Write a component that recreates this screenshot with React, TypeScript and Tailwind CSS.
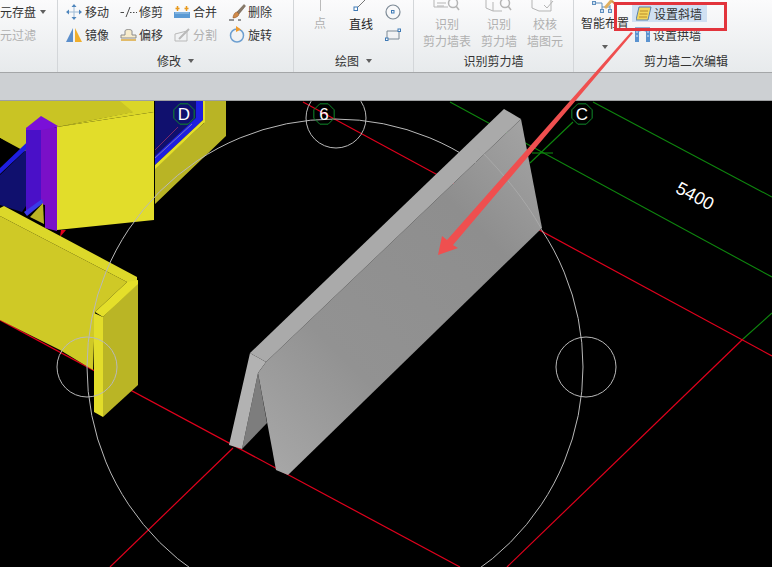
import React from 'react';

const IconMove = () => (
  <svg width="16" height="16" viewBox="0 0 16 16" fill="#4f86bd">
    <path d="M8 0l2.500 3h-5zM8 16l-2.500-3h5zM0 8l3-2.500v5zM16 8l-3 2.500v-5z" />
    <path d="M7.500 3h1v10h-1zM3 7.500h10v1H3z" fill="#9cbad6" />
  </svg>
);

const IconTrim = () => (
  <svg width="17" height="16" viewBox="0 0 17 16" fill="none" stroke="#4a4a4a">
    <path d="M0.500 8.500h3.500M10 3L6 13" />
    <path d="M10 8.500h7" strokeDasharray="1.500 1.500" />
  </svg>
);

const IconMerge = () => (
  <svg width="16" height="16" viewBox="0 0 16 16">
    <rect x="0" y="8" width="16" height="6" fill="#5b9ad4" />
    <path d="M1 9h14" stroke="#a8cbea" />
    <path d="M3.500 2v5M1.500 4.500h4M12.500 2v5M10.500 4.500h4" stroke="#e89a1e" strokeWidth="1.500" />
  </svg>
);

const IconBrush = () => (
  <svg width="17" height="18" viewBox="0 0 17 18" fill="none">
    <path d="M8 9L15 1.500l1.500 1.500L10 11z" fill="#8a7a68" stroke="#5a4c3e" strokeWidth="0.500" />
    <path d="M4 15c0-3 2-6 4-6l2 2c0 2-3 4-6 4z" fill="#cf8a4a" stroke="#8a4f20" strokeWidth="0.500" />
    <path d="M0 17h5M9 17h3" stroke="#333" />
  </svg>
);

const IconMirror = () => (
  <svg width="16" height="16" viewBox="0 0 16 16">
    <path d="M7 1v14H0z" fill="#5b8ecb" />
    <path d="M9 1v14h7z" fill="#f0ae2c" />
  </svg>
);

const IconOffset = () => (
  <svg width="17" height="16" viewBox="0 0 17 16" fill="none">
    <path d="M5 8V4c0-2 7-2 7 0v4h4v3H1V8z" fill="#f7eccd" stroke="#8c8c8c" />
    <path d="M1 13h15" stroke="#dca93c" strokeWidth="1.500" />
  </svg>
);

const IconSplit = () => (
  <svg width="17" height="16" viewBox="0 0 17 16" fill="none" stroke="#b9b9b9">
    <path d="M1 14V7l12-3v10z" />
    <path d="M5 12L15 2" strokeWidth="2" />
  </svg>
);

const IconRotate = () => (
  <svg width="16" height="17" viewBox="0 0 16 17" fill="none">
    <circle cx="8" cy="9.500" r="6.500" stroke="#6d9fd0" strokeWidth="1.500" />
    <path d="M7 0l5 3.500L7 6z" fill="#ef9a2c" />
  </svg>
);

const IconSlope = () => (
  <svg width="16" height="15" viewBox="0 0 16 15">
    <path d="M3 1h12l-3 13H0z" fill="#f3d65a" stroke="#5c83ad" />
    <path d="M4 5h8M3.500 8h8M3 11h8" stroke="#b88a2a" />
  </svg>
);

const IconArch = () => (
  <svg width="15" height="15" viewBox="0 0 15 15">
    <path d="M0 0h15v2H0z" fill="#8fb2d6" />
    <rect x="0" y="1" width="4" height="14" fill="#5b93d0" />
    <rect x="11" y="1" width="4" height="14" fill="#5b93d0" />
    <path d="M1 5h2M1 9h2M12 5h2M12 9h2" stroke="#d9e8f6" />
    <path d="M4 5c1-2 6-2 7 0" fill="none" stroke="#8fb2d6" />
  </svg>
);

const IconSmartLayout = () => (
  <svg width="26" height="14" viewBox="0 0 26 14" fill="none" className="shrink-0">
    <path d="M2 3h8M10 3v8M18 5v6M10 7h8" stroke="#5f8fbe" />
    <rect x="0.500" y="1.500" width="3" height="3" fill="#cfe0f1" stroke="#5f8fbe" />
    <rect x="8.500" y="9.500" width="3" height="3" fill="#cfe0f1" stroke="#5f8fbe" />
    <rect x="16.500" y="9.500" width="3" height="3" fill="#cfe0f1" stroke="#5f8fbe" />
    <path d="M13 8l7-8" stroke="#e0b060" strokeWidth="3" />
    <path d="M20 1l4 4" stroke="#d98a4a" strokeWidth="2" />
  </svg>
);

const IconSheetGhost = ({ kind }: { kind: 'table' | 'wall' | 'check' }) => (
  <svg width="30" height="12" viewBox="0 0 30 12" fill="none" stroke="#b5b5b5">
    {kind === 'table' && <path d="M2 0v7h14M5 3h9M5 6h7" />}
    {kind === 'wall' && <path d="M2 0v8l7 3V2M9 11h9" />}
    {kind === 'check' && <path d="M2 0v8l7 3h12V0M14 5l3 3 6-7" />}
    {kind !== 'check' && <circle cx="21" cy="3" r="4.500" strokeWidth="1.500" />}
    {kind !== 'check' && <path d="M24 6l3 4" strokeWidth="1.500" />}
  </svg>
);

const Caret = () => (
  <span className="inline-block w-0 h-0 border-x-[3.5px] border-x-transparent border-t-[4px] border-t-[#5f5f5f]" />
);

function ToolRow({ icon, label, disabled, width }: { icon: React.ReactNode; label: string; disabled?: boolean; width: string }) {
  return (
    <div className={`flex items-center h-[23px] ${width}`}>
      <span className="w-[19px] flex justify-start shrink-0">{icon}</span>
      <span className={disabled ? 'text-[#b0b0b0]' : 'text-[#333]'}>{label}</span>
    </div>
  );
}

function Group({ width, label, caret, children }: { width: string; label?: string; caret?: boolean; children: React.ReactNode }) {
  return (
    <div className={`${width} h-[72px] shrink-0 flex flex-col border-r border-[#d3d6d9]`}>
      <div className="h-[50px] overflow-hidden">{children}</div>
      <div className="flex-1 flex items-center justify-center gap-[7px] text-[#333] pb-[1px]">
        {label}
        {caret && <Caret />}
      </div>
    </div>
  );
}

const TallText = ({ lines }: { lines: string[] }) => (
  <div className="text-center leading-[17px] text-[#b0b0b0]">
    {lines.map((l) => (
      <div key={l}>{l}</div>
    ))}
  </div>
);

const modifyTools = [
  { icon: <IconMove />, label: '移动', width: 'w-[54px]' },
  { icon: <IconTrim />, label: '修剪', width: 'w-[54px]' },
  { icon: <IconMerge />, label: '合并', width: 'w-[55px]' },
  { icon: <IconBrush />, label: '删除', width: 'w-[50px]' },
  { icon: <IconMirror />, label: '镜像', width: 'w-[54px]' },
  { icon: <IconOffset />, label: '偏移', width: 'w-[54px]' },
  { icon: <IconSplit />, label: '分割', width: 'w-[55px]', disabled: true },
  { icon: <IconRotate />, label: '旋转', width: 'w-[50px]' },
];

function octagon(cx: number, cy: number, r: number) {
  const pts: string[] = [];
  for (let i = 0; i < 8; i++) {
    const a = (Math.PI / 4) * i + Math.PI / 8;
    pts.push(`${cx + r * Math.cos(a)},${cy + r * Math.sin(a)}`);
  }
  return pts.join(' ');
}

function Ribbon() {
  return (
    <div className="h-[73px] flex overflow-hidden border-b border-[#a4a6a8] bg-gradient-to-b from-[#fbfbfc] to-[#e7eaec] text-[12px] leading-none">
      <Group width="w-[58px]">
        <div className="h-[23px] flex items-center gap-[4px] text-[#333]">
          元存盘
          <Caret />
        </div>
        <div className="h-[23px] flex items-center text-[#b0b0b0]">元过滤</div>
      </Group>

      <Group width="w-[236px]" label="修改" caret>
        <div className="flex flex-wrap pl-[8px]">
          {modifyTools.map((t) => (
            <ToolRow key={t.label} icon={t.icon} label={t.label} width={t.width} disabled={t.disabled} />
          ))}
        </div>
      </Group>

      <Group width="w-[120px]" label="绘图" caret>
        <div className="flex pl-[18px]">
          <div className="w-[16px] flex flex-col items-center">
            <div className="h-[11px] w-px bg-[#bbb]" />
            <div className="mt-[6px] text-[#b0b0b0]">点</div>
          </div>
          <div className="w-[24px] ml-[21px] flex flex-col items-center">
            <svg width="16" height="12" viewBox="0 0 16 12" fill="none">
              <path d="M4 8L12 0" stroke="#777" />
              <rect x="1" y="7" width="3.500" height="3.500" fill="#fff" stroke="#3f7ab5" />
            </svg>
            <div className="mt-[6px] text-[#222] whitespace-nowrap">直线</div>
          </div>
          <div className="ml-[12px] flex flex-col">
            <div className="h-[23px] flex items-center">
              <svg width="16" height="16" viewBox="0 0 16 16" fill="none">
                <circle cx="8" cy="8" r="7" stroke="#7d8a96" strokeWidth="1.200" />
                <rect x="6.500" y="6.500" width="2.500" height="2.500" stroke="#3f7ab5" />
              </svg>
            </div>
            <div className="h-[23px] flex items-center">
              <svg width="16" height="14" viewBox="0 0 16 14" fill="none">
                <path d="M2 3h12v8H2z" stroke="#7d8a96" />
                <rect x="0.500" y="10" width="2.500" height="2.500" fill="#fff" stroke="#3f7ab5" />
                <rect x="13" y="1" width="2.500" height="2.500" fill="#fff" stroke="#3f7ab5" />
              </svg>
            </div>
          </div>
        </div>
      </Group>

      <Group width="w-[160px]" label="识别剪力墙">
        <div className="flex pl-[9px] gap-[10px]">
          {[
            { kind: 'table' as const, lines: ['识别', '剪力墙表'], w: 'w-[48px]' },
            { kind: 'wall' as const, lines: ['识别', '剪力墙'], w: 'w-[36px]' },
            { kind: 'check' as const, lines: ['校核', '墙图元'], w: 'w-[36px]' },
          ].map((c) => (
            <div key={c.kind} className={`${c.w} flex flex-col items-center`}>
              <div className="h-[15px] flex items-start">
                <IconSheetGhost kind={c.kind} />
              </div>
              <TallText lines={c.lines} />
            </div>
          ))}
        </div>
      </Group>

      <div className="flex-1 h-[72px] flex flex-col">
        <div className="h-[50px] flex overflow-hidden">
          <div className="w-[55px] flex flex-col items-center text-[#333] pl-[7px]">
            <IconSmartLayout />
            <div className="mt-[3px] whitespace-nowrap">智能布置</div>
            <div className="mt-[9px]">
              <Caret />
            </div>
          </div>
          <div className="ml-[3px] pt-[5px]">
            <div className="w-[75px] h-[17px] pl-[4px] flex items-center gap-[2px] bg-[#d0e0f2] text-[#333]">
              <IconSlope />
              <span>设置斜墙</span>
            </div>
            <div className="mt-[4px] h-[17px] pl-[3px] flex items-center gap-[3px] text-[#333]">
              <IconArch />
              <span>设置拱墙</span>
            </div>
          </div>
        </div>
        <div className="flex-1 flex justify-center items-center text-[#333] pl-[26px]">剪力墙二次编辑</div>
      </div>
    </div>
  );
}

function Scene() {
  return (
    <svg width="772" height="466" viewBox="0 101 772 466" className="block">
      <defs>
        <linearGradient id="wallFace" x1="0.1" y1="1" x2="0.9" y2="0">
          <stop offset="0" stopColor="#a6a6a6" />
          <stop offset="0.3" stopColor="#929292" />
          <stop offset="0.75" stopColor="#8e8e8e" />
          <stop offset="1" stopColor="#a2a2a2" />
        </linearGradient>
      </defs>

      {/* axis lines */}
      <g fill="none" stroke="#e0001c" strokeWidth="1.200">
        <path d="M303 102L772 356" />
        <path d="M0 320L460 567" />
        <path d="M507 567L743 339" />
        <path d="M233 448L110 567" />
      </g>
      <g fill="none" stroke="#0e860e" strokeWidth="1.100">
        <path d="M450 102L772 277" />
        <path d="M593 102L772 197" />
        <path d="M573 122L530 163" />
        <path d="M532 153H553" />
        <path d="M743 339L772 313" />
      </g>

      {/* upper right return */}
      <path d="M155 101H203V120L155 165Z" fill="#10106e" />
      <path d="M196 101H203V120L155 165V156L196 118Z" fill="#1e1ee0" />
      <path d="M155 158L192 124" stroke="#7a7ab8" fill="none" />
      <path d="M155 150L178 127" stroke="#7a2a6a" fill="none" />
      <path d="M204 101H226V136L155 204V168L204 123Z" fill="#b9b425" />
      <path d="M203 101H205V122L155 169V165L203 120Z" fill="#e4df2a" />

      {/* upper left block */}
      <path d="M0 101H135V112L57 127L45 125L26 128V152L0 138Z" fill="#c9c424" />
      <path d="M120 101H154V110V112L57 127L133 112Z" fill="#dad628" />
      <path d="M0 138L17 149L0 165Z" fill="#000" />
      <path d="M0 175L26 150V206L22 212L0 205Z" fill="#10106e" />
      <path d="M0 168L42 128L46 131L0 174Z" fill="#1e1ee0" />
      <path d="M26 128L41 116L58 126L46 132L41 130L26 137Z" fill="#7a10d8" />
      <path d="M26 130L41 130V204L26 215Z" fill="#4a10c8" />
      <path d="M41 130L57 127V231L45 228V205L41 204Z" fill="#7a10c8" />
      <path d="M24 212L42 199L43 203L27 216Z" fill="#3a3ae8" />
      <path d="M30 217L43 203L44 224Z" fill="#b9b425" />
      <path d="M57 127L154 112V220L57 230Z" fill="#e2dd2a" />
      <path d="M61 230L66 230L60 237Z" fill="#e0001c" />

      {/* lower wall */}
      <path d="M0 216L127 282L95 312L93 370L60 350L0 320Z" fill="#cfc926" />
      <path d="M0 208L4 206L137 277V284L127 282L0 216Z" fill="#dcd82a" />
      <path d="M103 317L138 283V385L103 417Z" fill="#bab525" />
      <path d="M95 312L127 282L138 280V284L103 317Z" fill="#e4df2a" />
      <path d="M94 313L103 317V417L94 412Z" fill="#e2dd2a" />

      {/* guide circles over the model */}
      <g fill="none" stroke="#b9b9b9" strokeWidth="1">
        <circle cx="335" cy="367" r="248" />
        <circle cx="336" cy="118" r="30" />
        <circle cx="87" cy="367" r="30" />
        <circle cx="586" cy="367" r="30" />
      </g>

      {/* sloped wall */}
      <path d="M258 373L267 423L242 449Z" fill="#7d7d7d" />
      <path d="M250 353L266 362L258 373L242 449L229 445Z" fill="#b2b2b2" />
      <path d="M266 362L521 119L542 228L288 475L276 470L258 373Z" fill="url(#wallFace)" />
      <path d="M250 353L504 109L521 119L266 362Z" fill="#aaaaaa" />
      <path d="M478 148C505 175 525 200 541 228" fill="none" stroke="#a9a9a9" />

      {/* axis bubbles */}
      <g fill="none" stroke="#0f8a2a" strokeWidth="1">
        <polygon points={octagon(324, 114, 11)} />
        <polygon points={octagon(582, 114, 11)} />
        <polygon points={octagon(184, 114, 11)} />
      </g>
      <g fill="#fff" fontFamily="'Liberation Sans', sans-serif" fontSize="17" textAnchor="middle">
        <text x="324" y="120">6</text>
        <text x="582" y="120">C</text>
        <text x="184" y="120">D</text>
        <text x="695" y="202" fontSize="18" transform="rotate(28 695 196)">5400</text>
      </g>
    </svg>
  );
}

export default function App() {
  return (
    <div className="relative w-[772px] h-[567px] overflow-hidden bg-black [font-family:'Noto_Sans_CJK_SC','Liberation_Sans',sans-serif]">
      <Ribbon />
      <div className="h-[28px] bg-[#cdd0d3] border-b border-[#9ea0a2]" />
      <Scene />

      {/* annotation laid over the screenshot */}
      <div className="absolute left-[614px] top-[2px] w-[113px] h-[29px] border-[3px] border-[#e2343c]" />
      <svg width="772" height="567" viewBox="0 0 772 567" className="absolute left-0 top-0 pointer-events-none">
        <path d="M438 255L442 236L447 240L631 32L633 33L453 245L458 248Z" fill="#ef4f4f" />
      </svg>
    </div>
  );
}
